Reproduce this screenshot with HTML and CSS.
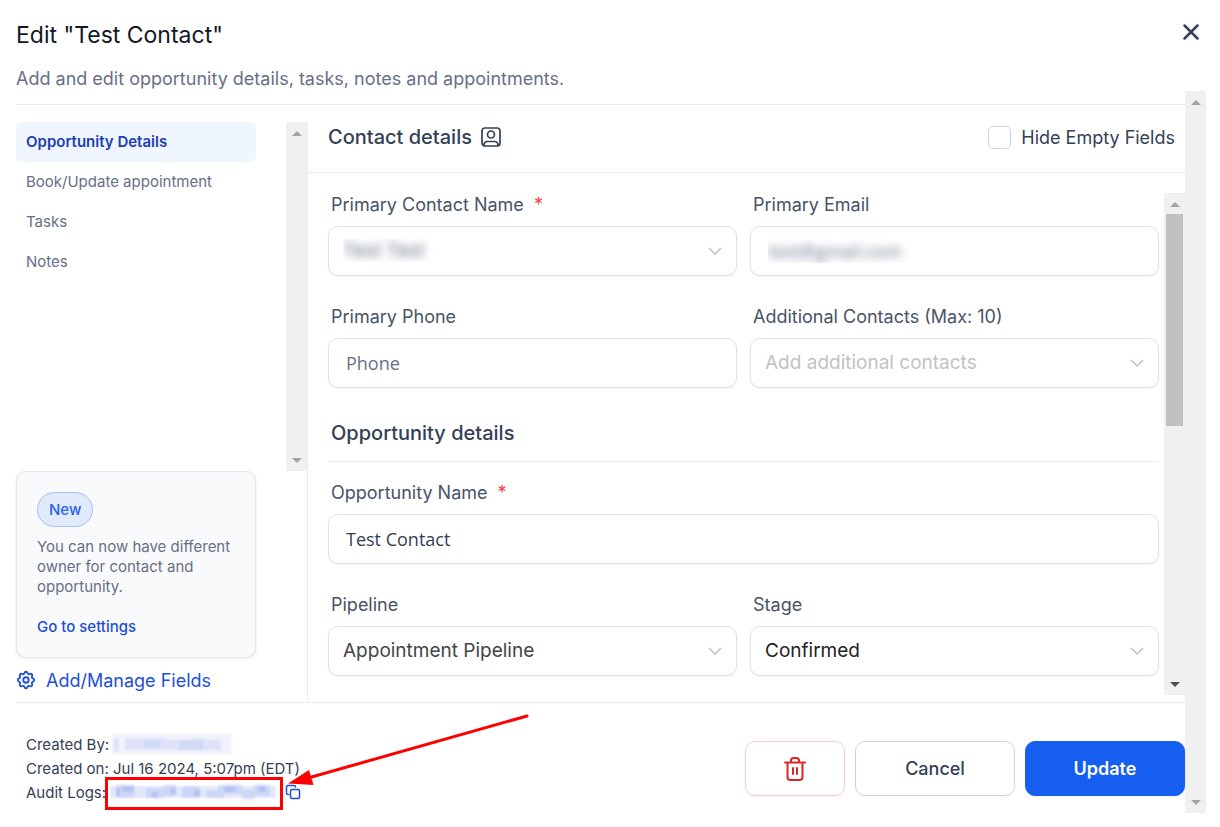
FILE: index.html
```html
<!DOCTYPE html>
<html lang="en">
<head>
    <meta charset="UTF-8">
    <meta name="viewport" content="width=device-width, initial-scale=1.0">
    <title>Edit "Test Contact"</title>
    <link rel="stylesheet" href="styles.css">
</head>
<body>
    <div class="modal">
        <header class="modal-header">
            <div>
                <h1>Edit "Test Contact"</h1>
                <p>Add and edit opportunity details, tasks, notes and appointments.</p>
            </div>
            <button class="close" type="button" aria-label="Close">
                <svg width="18" height="18" viewBox="0 0 18 18"><path d="M2.500 2.500l13 13M15.500 2.500l-13 13"/></svg>
            </button>
        </header>
        <div class="modal-body">
            <div class="content">
                <main class="columns">
                    <aside class="sidebar">
                        <div class="nav-wrap">
                            <nav>
                                <a class="active" href="#details">Opportunity Details</a>
                                <a href="#appointment">Book/Update appointment</a>
                                <a href="#tasks">Tasks</a>
                                <a href="#notes">Notes</a>
                            </nav>
                            <div class="scrollbar" aria-hidden="true"><i class="up"></i><i class="down"></i></div>
                        </div>
                        <div class="card">
                            <span class="badge">New</span>
                            <p>You can now have different owner for contact and opportunity.</p>
                            <a href="#settings">Go to settings</a>
                        </div>
                        <a class="manage" href="#fields">
                            <svg width="20" height="20" viewBox="1 1 22 22"><circle cx="12" cy="12" r="3"/><path d="M10.300 4.300c.4-1.800 3-1.800 3.400 0a1.700 1.700 0 0 0 2.600 1.100c1.500-.9 3.300.8 2.400 2.400a1.700 1.700 0 0 0 1 2.500c1.800.4 1.800 3 0 3.400a1.700 1.700 0 0 0-1 2.600c.9 1.500-.9 3.300-2.400 2.400a1.700 1.700 0 0 0-2.600 1c-.4 1.800-3 1.800-3.400 0a1.700 1.700 0 0 0-2.600-1c-1.500.9-3.300-.9-2.400-2.400a1.700 1.700 0 0 0-1-2.600c-1.800-.4-1.800-3 0-3.400a1.700 1.700 0 0 0 1-2.500c-.9-1.600.9-3.300 2.400-2.400 1 .6 2.300.1 2.600-1.100z"/></svg>
                            Add/Manage Fields
                        </a>
                    </aside>
                    <section class="details" id="details">
                        <div class="details-header">
                            <h2>Contact details
                                <svg width="22" height="22" viewBox="0 0 22 22"><rect x="2" y="2" width="18" height="18" rx="3"/><circle cx="11" cy="8.500" r="3.500"/><path d="M4 19.500c0-3 1.500-4 3.500-4h7c2 0 3.500 1 3.500 4"/></svg>
                            </h2>
                            <label class="check"><input type="checkbox">Hide Empty Fields</label>
                        </div>
                        <div class="form-wrap">
                            <form>
                                <div class="field">
                                    <label for="name">Primary Contact Name <b>*</b></label>
                                    <select id="name" class="masked"><option>Test Test</option></select>
                                </div>
                                <div class="field">
                                    <label for="email">Primary Email</label>
                                    <input id="email" class="masked" type="email" value="test@gmail.com">
                                </div>
                                <div class="field">
                                    <label for="phone">Primary Phone</label>
                                    <input id="phone" type="tel" placeholder="Phone">
                                </div>
                                <div class="field">
                                    <label for="contacts">Additional Contacts (Max: 10)</label>
                                    <select id="contacts" class="empty"><option>Add additional contacts</option></select>
                                </div>
                                <h2 class="wide">Opportunity details</h2>
                                <div class="field wide">
                                    <label for="opportunity">Opportunity Name <b>*</b></label>
                                    <input id="opportunity" type="text" value="Test Contact">
                                </div>
                                <div class="field">
                                    <label for="pipeline">Pipeline</label>
                                    <select id="pipeline"><option>Appointment Pipeline</option></select>
                                </div>
                                <div class="field">
                                    <label for="stage">Stage</label>
                                    <select id="stage" class="stage"><option>Confirmed</option></select>
                                </div>
                            </form>
                            <div class="scrollbar" aria-hidden="true"><i class="up"></i><span class="thumb"></span><i class="down dark"></i></div>
                        </div>
                    </section>
                </main>
                <footer>
                    <div class="audit">
                        <p>Created By:
                            <a href="#user" aria-label="Created by user"><svg class="mosaic" width="118" height="20" viewBox="0 0 118 20"><path opacity=".08" d="M0 0h118v20H0z"/><path opacity=".1" d="M0 4h6v14H0zM12 4h42v12H12zM54 6h54v10H54z"/><path opacity=".08" d="M30 6h18v8H30zM66 6h12v10H66zM78 4h12v12H78z"/></svg></a>
                        </p>
                        <p>Created on: Jul 16 2024, 5:07pm (EDT)</p>
                        <p>Audit Logs:
                            <a href="#audit" aria-label="Audit log"><svg class="mosaic" width="166" height="20" viewBox="0 0 166 20"><path opacity=".14" d="M0 4h166v12H0z"/><path opacity=".12" d="M6 2h18v14H6zM36 6h18v10H36zM54 2h12v12H54zM72 4h18v12H72zM96 8h18v8H96zM108 2h24v10h-24zM132 8h12v10h-12zM144 2h16v12h-16z"/><path opacity=".16" d="M6 6h4v8H6zM12 4h12v6H12zM42 10h6v6h-6zM60 6h6v6h-6zM84 8h6v6h-6zM114 4h12v6h-12zM148 4h8v6h-8z"/></svg></a>
                            <button class="copy" type="button" aria-label="Copy audit log"><svg width="16" height="16" viewBox="0 0 16 16"><rect x="5.500" y="5.500" width="9" height="9" rx="1.500"/><path d="M3.500 10.500h-.5A1.500 1.500 0 0 1 1.500 9V3A1.500 1.500 0 0 1 3 1.500h6A1.500 1.500 0 0 1 10.500 3"/></svg></button>
                        </p>
                    </div>
                    <div class="actions">
                        <button class="delete" type="button" aria-label="Delete">
                            <svg width="24" height="26" viewBox="0 0 24 26"><path d="M2 6.500h20M4.500 6.500V21a3 3 0 0 0 3 3h9a3 3 0 0 0 3-3V6.500M8 6V4.500A2.500 2.500 0 0 1 10.500 2h3A2.500 2.500 0 0 1 16 4.500V6M10 12v6M14 12v6"/></svg>
                        </button>
                        <button class="cancel" type="button">Cancel</button>
                        <button class="update" type="submit">Update</button>
                    </div>
                    <svg class="callout" width="430" height="102" viewBox="100 710 430 102" aria-hidden="true">
                        <rect x="106.500" y="778.500" width="175" height="30"/>
                        <path d="M527 716L308 778"/>
                        <path class="tip" d="M288 783.500L309 770l4.500 15z"/>
                    </svg>
                </footer>
            </div>
            <div class="scrollbar" aria-hidden="true"><i class="up"></i><i class="down"></i></div>
        </div>
    </div>
</body>
</html>
```

FILE: styles.css
```css
* {
    box-sizing: border-box;
}
body {
    margin: 0;
    font-family: Inter, "Liberation Sans", sans-serif;
    font-size: 18px;
    color: #344054;
    background: white;
}
h1, h2, p {
    margin: 0;
    font-weight: 400;
}
a {
    color: #1d4ed8;
    text-decoration: none;
}
svg {
    fill: none;
    stroke: currentColor;
    stroke-width: 2;
    stroke-linecap: round;
    stroke-linejoin: round;
}
button {
    font: inherit;
    color: inherit;
    background: white;
    border: 0;
    padding: 0;
    cursor: pointer;
}

.modal {
    display: flex;
    flex-direction: column;
    min-height: 100vh;
    padding: 0 14px 14px 16px;
}
.modal-header {
    display: flex;
    justify-content: space-between;
    align-items: flex-start;
    height: 91px;
    padding-top: 20px;
}
h1 {
    font-size: 23px;
    line-height: 30px;
    color: #101828;
}
.modal-header p {
    margin-top: 16px;
    line-height: 26px;
    color: #667085;
}
.close {
    display: grid;
    place-content: center;
    width: 30px;
    height: 24px;
}
.close svg {
    stroke-width: 2.500;
}
.modal-body {
    flex: 1;
    display: flex;
}
.content {
    flex: 1;
    display: flex;
    flex-direction: column;
    margin-top: 13px;
    border-top: 1px solid #eaecf0;
}
.columns {
    flex: 1;
    display: flex;
}

.scrollbar {
    flex: none;
    display: flex;
    flex-direction: column;
    align-items: center;
    width: 21px;
    padding: 9px 0 8px;
    background: #f0f0f0;
}
.up, .down {
    border: 5px solid transparent;
    border-top-width: 0;
    border-bottom: 5px solid #a3a3a3;
}
.down {
    margin-top: auto;
    transform: rotate(180deg);
}
.dark {
    border-bottom-color: #505050;
}
.thumb {
    width: 17px;
    height: 212px;
    margin-top: 7px;
    background: #c1c1c1;
}

.sidebar {
    display: flex;
    flex-direction: column;
    width: 291px;
    padding-top: 17px;
    font-size: 15px;
}
.nav-wrap {
    flex: 1;
    display: flex;
    justify-content: space-between;
}
nav {
    width: 240px;
}
nav a {
    display: block;
    padding: 0 10px;
    line-height: 40px;
    color: #667085;
}
nav .active {
    font-weight: 600;
    color: #1e40af;
    background: #eff6ff;
    border-radius: 6px;
}
.card {
    width: 240px;
    padding: 20px;
    line-height: 20px;
    color: #667085;
    background: #f9fafb;
    border: 1px solid #e5e7eb;
    border-radius: 10px;
    box-shadow: 0 1px 3px #1018281a;
}
.badge {
    display: inline-block;
    padding: 0 11px;
    line-height: 33px;
    font-weight: 500;
    color: #2563eb;
    background: #e0eafb;
    border: 1px solid #a4bffa;
    border-radius: 18px;
}
.card p {
    margin: 10px 0 20px;
}
.card a {
    font-weight: 500;
}
.manage {
    display: flex;
    align-items: center;
    gap: 10px;
    height: 44px;
    font-size: 18px;
}
.details {
    flex: 1;
    display: flex;
    flex-direction: column;
    margin-top: 17px;
    border-left: 1px solid #eaecf0;
}
.details-header {
    display: flex;
    justify-content: space-between;
    align-items: center;
    height: 51px;
    padding: 0 10px 20px 20px;
    border-bottom: 1px solid #eaecf0;
}
h2 {
    font-size: 20px;
    line-height: 28px;
    font-weight: 500;
}
.details-header h2 {
    display: flex;
    align-items: center;
    gap: 8px;
}
h2 svg {
    stroke-width: 1.700;
}
.check {
    display: flex;
    align-items: center;
    gap: 10px;
}
.check input {
    appearance: none;
    width: 23px;
    height: 23px;
    margin: 0;
    border: 1px solid #d0d5dd;
    border-radius: 5px;
}
.form-wrap {
    flex: 1;
    display: flex;
    margin: 20px 0 7px;
}
form {
    flex: 1;
    display: grid;
    grid-template-columns: 1fr 1fr;
    gap: 30px 13px;
    align-content: start;
    padding: 1px 5px 0 20px;
}
.wide {
    grid-column: 1 / -1;
}
form h2 {
    padding: 1px 3px 14px;
    margin-bottom: -10px;
    border-bottom: 1px solid #eaecf0;
}
.field {
    display: grid;
    gap: 10px;
}
.field label {
    padding-left: 3px;
    line-height: 22px;
    color: #475467;
}
b {
    margin-left: 5px;
    font-weight: 400;
    color: #ef4444;
}
.field input, .field select {
    appearance: none;
    width: 100%;
    height: 50px;
    padding: 0 17px;
    font-family: "Open Sans", "Noto Sans", sans-serif;
    font-size: 18px;
    color: #344054;
    background: white;
    border: 1px solid #dfe1e8;
    border-radius: 10px;
    box-shadow: 0 1px 2px #1018280d;
}
.field input::placeholder {
    color: #667085;
}
.field select {
    padding: 0 14px 2px;
    font-family: Inter, sans-serif;
    font-size: 19px;
    color: #444;
    background: white url("data:image/svg+xml,%3Csvg xmlns='http://www.w3.org/2000/svg' width='14' height='8' fill='none' stroke='%23c2c2c2' stroke-width='1.500'%3E%3Cpath d='M1 1l6 6 6-6'/%3E%3C/svg%3E") no-repeat right 14px center;
}
.field .empty {
    color: #c2c2c2;
}
.field .stage {
    color: #222;
}
.field .masked {
    color: transparent;
    text-shadow: 0 0 8px #667085;
}

footer {
    position: relative;
    display: flex;
    justify-content: space-between;
    align-items: flex-start;
    height: 111px;
    border-top: 1px solid #eaecf0;
}
.audit {
    padding: 29px 0 0 10px;
    font-size: 15px;
}
.audit p {
    display: flex;
    align-items: center;
    gap: 4px;
    height: 24px;
}
.audit a {
    display: flex;
}
.mosaic {
    fill: #3b5bdb;
    stroke: none;
    filter: blur(1px);
}
.copy {
    display: flex;
    margin-left: 5px;
    color: #1d4ed8;
    background: none;
}
.copy svg {
    stroke-width: 1.500;
}
.actions {
    display: flex;
    gap: 10px;
    padding-top: 38px;
}
.actions button {
    width: 160px;
    height: 55px;
    font-weight: 500;
    border: 1px solid #d0d5dd;
    border-radius: 10px;
    box-shadow: 0 1px 2px #1018280d;
}
.actions .delete {
    display: grid;
    place-content: center;
    width: 100px;
    color: #dc2626;
    border-color: #fecaca;
}
.actions .update {
    font-weight: 600;
    color: white;
    background: #155eef;
    border-color: #155eef;
}
.callout {
    position: absolute;
    left: 84px;
    top: 7px;
    stroke: red;
    stroke-width: 3;
    stroke-linejoin: miter;
    pointer-events: none;
}
.tip {
    fill: red;
    stroke: none;
}
```
